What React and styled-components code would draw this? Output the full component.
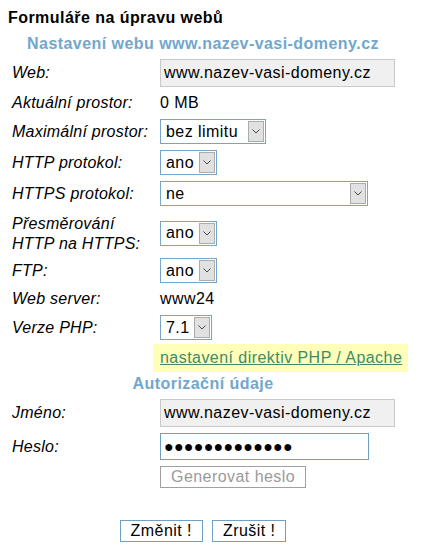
import styled, { createGlobalStyle } from "styled-components"

const GlobalStyle = createGlobalStyle`
    body {
        margin: 8px;
        background: #fff;
        color: #000;
        font-family: "Liberation Sans", Arial, sans-serif;
        font-size: 16px;
        letter-spacing: 0.45px;
    }
`

const Title = styled.div`
    font-weight: bold;
    line-height: 20px;
    margin-bottom: 6px;
`

const Form = styled.form`
    width: 390px;
    margin: 0;
`

const SectionHead = styled.div`
    text-align: center;
    font-weight: bold;
    color: #72a7cd;
    line-height: 20px;
    padding-bottom: 2px;
`

const Row = styled.div`
    display: grid;
    grid-template-columns: 152px 1fr;
    align-items: center;
    padding: ${({ $pad }) => $pad || "3px 0"};
`

const Label = styled.label`
    font-style: italic;
    letter-spacing: 0.25px;
    line-height: 20px;
    padding-left: 4px;
    padding-top: ${({ $lines }) => $lines > 1 ? "2px" : "0"};
`

const Value = styled.div`
    display: flex;
    align-items: center;
    line-height: 20px;
    white-space: nowrap;
`

const TextInput = styled.input`
    box-sizing: border-box;
    width: ${({ $w }) => $w}px;
    height: ${({ $h }) => $h || 28}px;
    margin: 0;
    padding: 0 3px;
    font: inherit;
    letter-spacing: ${({ $dots }) => $dots ? "0.25px" : "inherit"};
    color: #000;
    border: 1px solid ${({ $locked }) => $locked ? "#c9c9c9" : "#6f9fc4"};
    background: ${({ $locked }) => $locked ? "#f0f0f0" : "#fff"};
    outline: none;
`

const SelectBox = styled.span`
    box-sizing: border-box;
    display: inline-flex;
    width: ${({ $w }) => $w}px;
    height: 25px;
    border: 1px solid #77a5c7;
    background: #fff;
`

const NativeSelect = styled.select`
    appearance: none;
    flex: 1;
    min-width: 0;
    margin: 0;
    padding: 0 0 0 5px;
    border: 0;
    background: transparent;
    font: inherit;
    letter-spacing: inherit;
    color: #000;
    outline: none;
`

const ArrowBox = styled.span`
    box-sizing: border-box;
    width: 16px;
    margin: 1px;
    border: 1px solid #acacac;
    background: #e1e1e1;
    display: flex;
    align-items: center;
    justify-content: center;
`

const LinkBox = styled.a`
    display: inline-block;
    flex: none;
    padding: 4px 6px 4px 7px;
    margin-left: -7px;
    line-height: 20px;
    white-space: nowrap;
    background: #ffffba;
    color: #3e8b6b;
    text-decoration: underline;
`

const Button = styled.button`
    box-sizing: border-box;
    height: 22px;
    margin: 0;
    padding: 0 10px;
    font: inherit;
    letter-spacing: inherit;
    line-height: 20px;
    background: #fff;
    color: ${({ $muted }) => $muted ? "#9a9a9a" : "#000"};
    border: 1px solid ${({ $muted }) => $muted ? "#a0a0a0" : "#6f9fc4"};
`

const ButtonBar = styled.div`
    display: flex;
    justify-content: center;
    gap: 9px;
    margin-top: 29px;
`

const Select = ({ width, value, options }) => (
    <SelectBox $w={width}>
        <NativeSelect defaultValue={value}>
            {options.map((o) => <option key={o}>{o}</option>)}
        </NativeSelect>
        <ArrowBox>
            <svg width="8" height="5" viewBox="0 0 8 5">
                <polyline points="0.5,0.5 4,4 7.5,0.5" fill="none" stroke="#4a4a4a" strokeWidth="1" />
            </svg>
        </ArrowBox>
    </SelectBox>
)

const yesNo = ["ano", "ne"]

const App = () => {
    return (
        <>
            <GlobalStyle />
            <Title>Formuláře na úpravu webů</Title>
            <Form onSubmit={(e) => e.preventDefault()}>
                <SectionHead>Nastavení webu www.nazev-vasi-domeny.cz</SectionHead>
                <Row>
                    <Label>Web:</Label>
                    <Value><TextInput $w={235} $locked readOnly value="www.nazev-vasi-domeny.cz" /></Value>
                </Row>
                <Row>
                    <Label>Aktuální prostor:</Label>
                    <Value>0 MB</Value>
                </Row>
                <Row>
                    <Label>Maximální prostor:</Label>
                    <Value><Select width={106} value="bez limitu" options={["bez limitu", "1 GB", "5 GB"]} /></Value>
                </Row>
                <Row>
                    <Label>HTTP protokol:</Label>
                    <Value><Select width={57} value="ano" options={yesNo} /></Value>
                </Row>
                <Row>
                    <Label>HTTPS protokol:</Label>
                    <Value><Select width={208} value="ne" options={yesNo} /></Value>
                </Row>
                <Row $pad="3px 0 1px">
                    <Label $lines={2}>Přesměrování<br />HTTP na HTTPS:</Label>
                    <Value><Select width={57} value="ano" options={yesNo} /></Value>
                </Row>
                <Row>
                    <Label>FTP:</Label>
                    <Value><Select width={57} value="ano" options={yesNo} /></Value>
                </Row>
                <Row>
                    <Label>Web server:</Label>
                    <Value>www24</Value>
                </Row>
                <Row>
                    <Label>Verze PHP:</Label>
                    <Value><Select width={52} value="7.1" options={["7.1", "7.4", "8.0"]} /></Value>
                </Row>
                <Row $pad="1px 0 2px">
                    <span />
                    <Value><LinkBox href="#">nastavení direktiv PHP / Apache</LinkBox></Value>
                </Row>
                <SectionHead>Autorizační údaje</SectionHead>
                <Row>
                    <Label>Jméno:</Label>
                    <Value><TextInput $w={235} $locked readOnly value="www.nazev-vasi-domeny.cz" /></Value>
                </Row>
                <Row>
                    <Label>Heslo:</Label>
                    <Value><TextInput $w={209} $h={27} $dots defaultValue="●●●●●●●●●●●●●" /></Value>
                </Row>
                <Row>
                    <span />
                    <Value><Button type="button" $muted>Generovat heslo</Button></Value>
                </Row>
                <ButtonBar>
                    <Button type="submit">Změnit !</Button>
                    <Button type="button">Zrušit !</Button>
                </ButtonBar>
            </Form>
        </>
    )
}

export default App
